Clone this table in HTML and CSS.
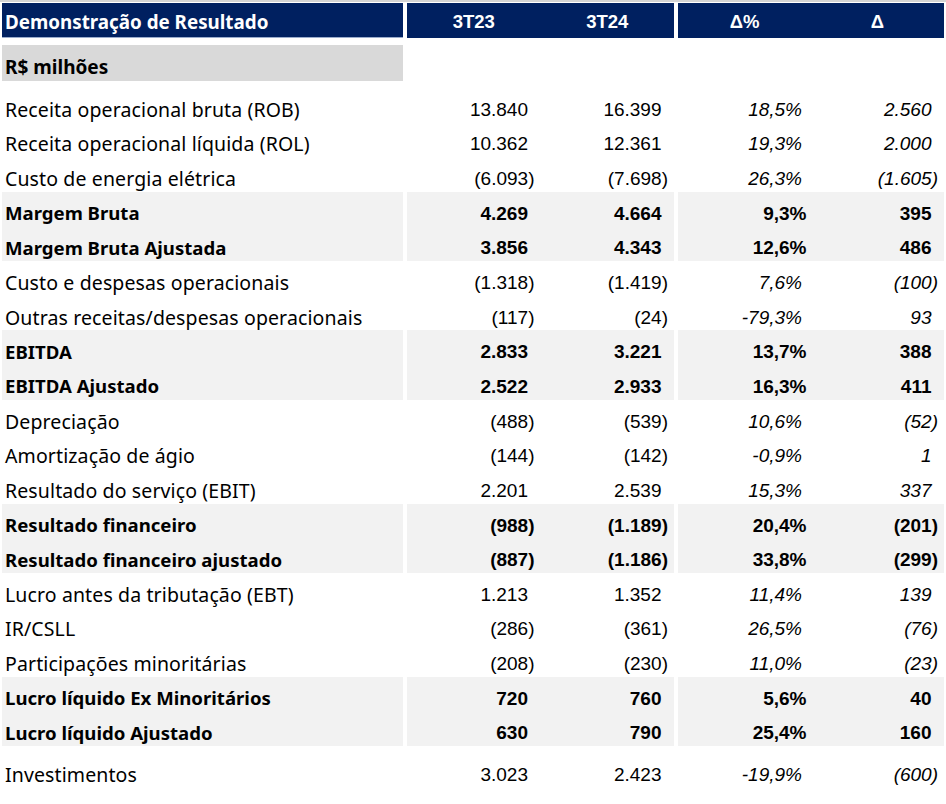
FILE: index.html
```html
<!DOCTYPE html>
<html lang="pt-BR">
<head>
<meta charset="utf-8">
<title>Demonstração de Resultado</title>
<link rel="stylesheet" href="styles.css">
</head>
<body>
<div class="sheet">
  <div class="head">
    <div class="lbl">Demonstração de Resultado</div>
    <div class="grp a"><div class="h">3T23</div><div class="h">3T24</div></div>
    <div class="grp b"><div class="h">Δ%</div><div class="h">Δ</div></div>
  </div>
  <div class="unit"><div class="lbl">R$ milhões</div></div>
  <div class="rows">
    <div class="row"><div class="lbl">Receita operacional bruta (ROB)</div><div class="grp a"><div class="n">13.840</div><div class="n">16.399</div></div><div class="grp b"><div class="n i pc">18,5%</div><div class="n i">2.560</div></div></div>
    <div class="row"><div class="lbl">Receita operacional líquida (ROL)</div><div class="grp a"><div class="n">10.362</div><div class="n">12.361</div></div><div class="grp b"><div class="n i pc">19,3%</div><div class="n i">2.000</div></div></div>
    <div class="row"><div class="lbl">Custo de energia elétrica</div><div class="grp a"><div class="n neg">(6.093)</div><div class="n neg">(7.698)</div></div><div class="grp b"><div class="n i pc">26,3%</div><div class="n i neg">(1.605)</div></div></div>
    <div class="row band"><div class="lbl">Margem Bruta</div><div class="grp a"><div class="n">4.269</div><div class="n">4.664</div></div><div class="grp b"><div class="n pc">9,3%</div><div class="n">395</div></div></div>
    <div class="row band"><div class="lbl">Margem Bruta Ajustada</div><div class="grp a"><div class="n">3.856</div><div class="n">4.343</div></div><div class="grp b"><div class="n pc">12,6%</div><div class="n">486</div></div></div>
    <div class="row"><div class="lbl">Custo e despesas operacionais</div><div class="grp a"><div class="n neg">(1.318)</div><div class="n neg">(1.419)</div></div><div class="grp b"><div class="n i pc">7,6%</div><div class="n i neg">(100)</div></div></div>
    <div class="row"><div class="lbl">Outras receitas/despesas operacionais</div><div class="grp a"><div class="n neg">(117)</div><div class="n neg">(24)</div></div><div class="grp b"><div class="n i pc">-79,3%</div><div class="n i">93</div></div></div>
    <div class="row band"><div class="lbl">EBITDA</div><div class="grp a"><div class="n">2.833</div><div class="n">3.221</div></div><div class="grp b"><div class="n pc">13,7%</div><div class="n">388</div></div></div>
    <div class="row band"><div class="lbl">EBITDA Ajustado</div><div class="grp a"><div class="n">2.522</div><div class="n">2.933</div></div><div class="grp b"><div class="n pc">16,3%</div><div class="n">411</div></div></div>
    <div class="row"><div class="lbl">Depreciação</div><div class="grp a"><div class="n neg">(488)</div><div class="n neg">(539)</div></div><div class="grp b"><div class="n i pc">10,6%</div><div class="n i neg">(52)</div></div></div>
    <div class="row"><div class="lbl">Amortização de ágio</div><div class="grp a"><div class="n neg">(144)</div><div class="n neg">(142)</div></div><div class="grp b"><div class="n i pc">-0,9%</div><div class="n i">1</div></div></div>
    <div class="row"><div class="lbl">Resultado do serviço (EBIT)</div><div class="grp a"><div class="n">2.201</div><div class="n">2.539</div></div><div class="grp b"><div class="n i pc">15,3%</div><div class="n i">337</div></div></div>
    <div class="row band"><div class="lbl">Resultado financeiro</div><div class="grp a"><div class="n neg">(988)</div><div class="n neg">(1.189)</div></div><div class="grp b"><div class="n pc">20,4%</div><div class="n neg">(201)</div></div></div>
    <div class="row band"><div class="lbl">Resultado financeiro ajustado</div><div class="grp a"><div class="n neg">(887)</div><div class="n neg">(1.186)</div></div><div class="grp b"><div class="n pc">33,8%</div><div class="n neg">(299)</div></div></div>
    <div class="row"><div class="lbl">Lucro antes da tributação (EBT)</div><div class="grp a"><div class="n">1.213</div><div class="n">1.352</div></div><div class="grp b"><div class="n i pc">11,4%</div><div class="n i">139</div></div></div>
    <div class="row"><div class="lbl">IR/CSLL</div><div class="grp a"><div class="n neg">(286)</div><div class="n neg">(361)</div></div><div class="grp b"><div class="n i pc">26,5%</div><div class="n i neg">(76)</div></div></div>
    <div class="row"><div class="lbl">Participações minoritárias</div><div class="grp a"><div class="n neg">(208)</div><div class="n neg">(230)</div></div><div class="grp b"><div class="n i pc">11,0%</div><div class="n i neg">(23)</div></div></div>
    <div class="row band"><div class="lbl">Lucro líquido Ex Minoritários</div><div class="grp a"><div class="n">720</div><div class="n">760</div></div><div class="grp b"><div class="n pc">5,6%</div><div class="n">40</div></div></div>
    <div class="row band"><div class="lbl">Lucro líquido Ajustado</div><div class="grp a"><div class="n">630</div><div class="n">790</div></div><div class="grp b"><div class="n pc">25,4%</div><div class="n">160</div></div></div>
    <div class="row inv"><div class="lbl">Investimentos</div><div class="grp a"><div class="n">3.023</div><div class="n">2.423</div></div><div class="grp b"><div class="n i pc">-19,9%</div><div class="n i neg">(600)</div></div></div>
  </div>
</div>
</body>
</html>
```
FILE: styles.css
```css
* { box-sizing: border-box; margin: 0; padding: 0; }

body {
  background: #ffffff;
  color: #000000;
  font-family: "Noto Sans", sans-serif;
}

.sheet {
  border-top: 2px solid #d4d4d4;
  padding: 1px 2px 0 2px;
}

.head, .unit, .row {
  display: flex;
  gap: 4px;
}

.lbl {
  width: 401px;
  display: flex;
  align-items: center;
  padding-left: 3px;
  font-size: 19.5px;
  letter-spacing: 0.12px;
  white-space: nowrap;
}

.grp {
  display: grid;
  grid-template-columns: 1fr 1fr;
}
.grp.a { width: 267px; }
.grp.b { width: 266px; }

/* header */
.head {
  height: 35px;
}
.head .lbl {
  height: 35px;
  background: #002060;
  border-bottom: 1px solid #9aaccc;
  color: #ffffff;
  font-weight: 700;
  font-size: 18.8px;
  letter-spacing: 0;
  padding-top: 3px;
}
.head .grp {
  background: #002060;
}
.h {
  display: flex;
  align-items: center;
  justify-content: center;
  padding-top: 2px;
  color: #ffffff;
  font-family: "Liberation Sans", Arial, sans-serif;
  font-weight: 700;
  font-size: 18.5px;
}

/* unit */
.unit {
  margin-top: 7px;
  height: 36px;
}
.unit .lbl {
  background: #d9d9d9;
  font-weight: 700;
  font-size: 19px;
  letter-spacing: 0;
  padding-top: 7px;
}

/* data rows */
.rows {
  margin-top: 7px;
  display: flex;
  flex-direction: column;
}
.row {
  height: 34.65px;
}
.row .lbl {
  padding-top: 8px;
}
.row.band .lbl,
.row.band .grp {
  background: #f2f2f2;
}
.row.band .lbl {
  font-weight: 700;
  font-size: 18.6px;
  letter-spacing: 0;
  padding-top: 7px;
}
.row.inv {
  margin-top: 7.3px;
}

.n {
  display: flex;
  align-items: center;
  justify-content: flex-end;
  padding-top: 9px;
  padding-right: 12.5px;
  font-family: "Liberation Sans", Arial, sans-serif;
  font-size: 19px;
  white-space: nowrap;
}
.n.neg { padding-right: 6px; }
.n.i { font-style: italic; }
.n.pc { padding-right: 9px; }
.row.band .n { font-weight: 700; }
.row.band .n.pc { padding-right: 4.5px; }
```
